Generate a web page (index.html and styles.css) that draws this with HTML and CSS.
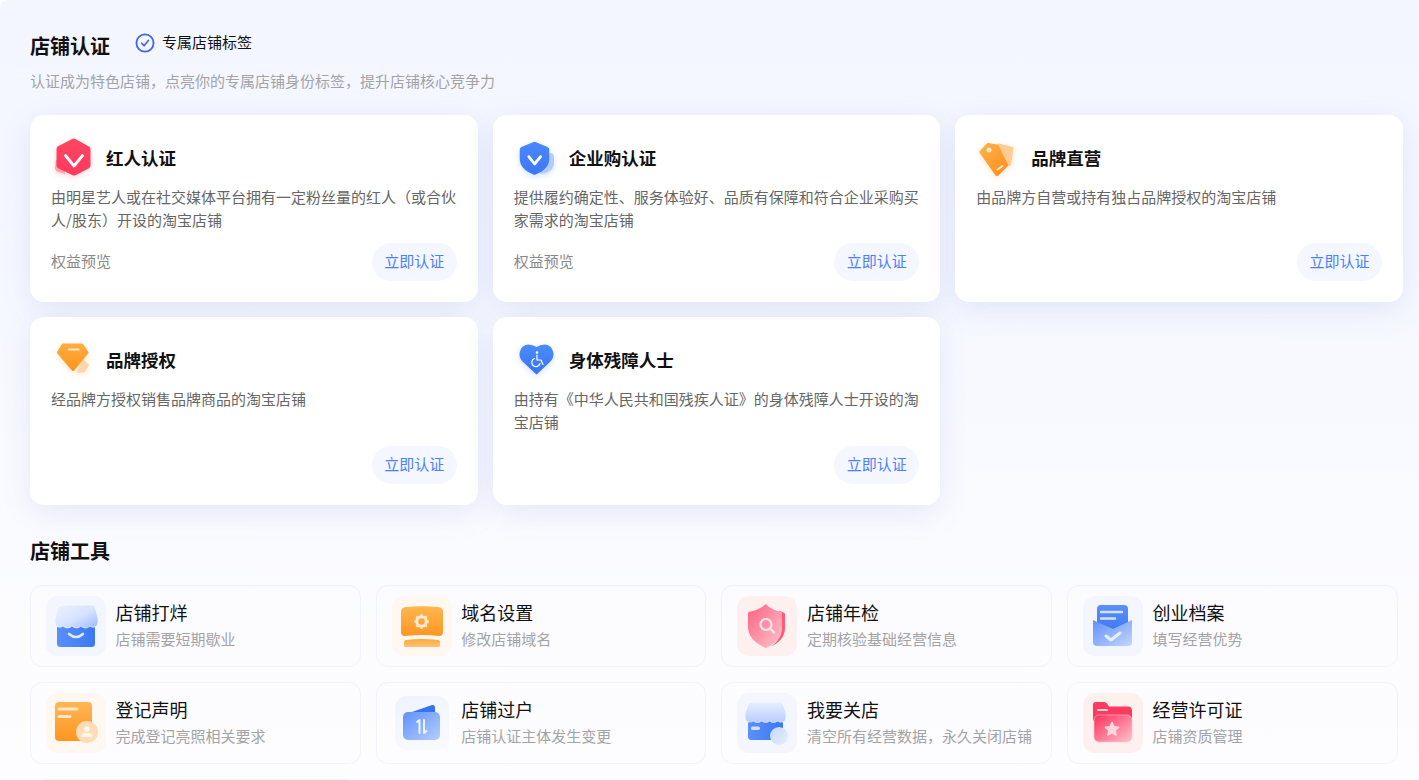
FILE: index.html
```html
<!DOCTYPE html>
<html lang="zh-CN">
<head>
<meta charset="utf-8">
<title>店铺认证</title>
<link rel="stylesheet" href="styles.css">
</head>
<body>
<main class="page">
  <header class="head">
    <h1 class="h1">店铺认证</h1>
    <div class="tag">
      <svg class="tag-icon" width="20" height="20" viewBox="0 0 20 20"><circle cx="10" cy="10" r="8.600" fill="none" stroke="#3f63f5" stroke-width="1.800"/><path d="M6.600 10.200l2.400 2.600 4.400-5.400" fill="none" stroke="#3f63f5" stroke-width="1.600" stroke-linecap="round" stroke-linejoin="round"/></svg>
      <span>专属店铺标签</span>
    </div>
  </header>
  <p class="lead">认证成为特色店铺，点亮你的专属店铺身份标签，提升店铺核心竞争力</p>

  <section class="certs">
    <article class="cert">
      <div class="cert-head">
        <svg class="cert-icon glow-red" viewBox="0 0 49 49"><defs><linearGradient id="c1" x1="0" y1="0" x2="0" y2="1"><stop offset="0" stop-color="#ff4562"/><stop offset="1" stop-color="#ff3a5c"/></linearGradient></defs><path d="M5 24l9-1v15l-7-2q-3-1-3-4z" fill="#ffa3ad"/><path d="M23 5.500l13.500 7.500v16.500L23 36.500 8.500 29.500V13z" fill="url(#c1)" stroke="url(#c1)" stroke-width="6" stroke-linejoin="round"/><path d="M14.500 19.500L23 30l8.500-10.500" fill="none" stroke="#fff" stroke-width="2.800" stroke-linecap="round" stroke-linejoin="round"/></svg>
        <h2 class="cert-title">红人认证</h2>
      </div>
      <p class="cert-desc">由明星艺人或在社交媒体平台拥有一定粉丝量的红人（或合伙人/股东）开设的淘宝店铺</p>
      <div class="cert-foot"><a class="perk">权益预览</a><a class="btn">立即认证</a></div>
    </article>
    <article class="cert">
      <div class="cert-head">
        <svg class="cert-icon glow-blue" viewBox="0 0 49 49"><defs><linearGradient id="c2" x1="0" y1="0" x2="0" y2="1"><stop offset="0" stop-color="#4a86ff"/><stop offset="1" stop-color="#3d79f6"/></linearGradient></defs><path d="M30 17h6q4 0 4 4v6q0 7-8 10l-6 1z" fill="#b3cdfd"/><path d="M20.500 8.500l12 5v9.500q0 8-12 13-12-5-12-13v-9.500z" fill="url(#c2)" stroke="url(#c2)" stroke-width="5.500" stroke-linejoin="round"/><path d="M14.800 20.700l5.800 7.300 6-7.300" fill="none" stroke="#fff" stroke-width="2.800" stroke-linecap="round" stroke-linejoin="round"/></svg>
        <h2 class="cert-title">企业购认证</h2>
      </div>
      <p class="cert-desc">提供履约确定性、服务体验好、品质有保障和符合企业采购买家需求的淘宝店铺</p>
      <div class="cert-foot"><a class="perk">权益预览</a><a class="btn">立即认证</a></div>
    </article>
    <article class="cert">
      <div class="cert-head">
        <svg class="cert-icon glow-orange" viewBox="0 0 49 49"><defs><linearGradient id="c3" x1="0" y1="0" x2="1" y2="1"><stop offset="0" stop-color="#ffb04a"/><stop offset="1" stop-color="#ff8f1c"/></linearGradient></defs><path d="M23 9l13 3.500-2.500 16-6-2z" fill="#ffcc94" stroke="#ffcc94" stroke-width="3" stroke-linejoin="round"/><path d="M12 9l9 1.500 9 18.500-9 9L5.500 16z" fill="url(#c3)" stroke="url(#c3)" stroke-width="4" stroke-linejoin="round"/><circle cx="13" cy="14" r="2.500" fill="#ffe9cf"/><path d="M21.500 33.500l5-3.500" stroke="#ffe9cf" stroke-width="2" stroke-linecap="round"/></svg>
        <h2 class="cert-title">品牌直营</h2>
      </div>
      <p class="cert-desc">由品牌方自营或持有独占品牌授权的淘宝店铺</p>
      <div class="cert-foot"><span></span><a class="btn">立即认证</a></div>
    </article>
    <article class="cert">
      <div class="cert-head">
        <svg class="cert-icon glow-orange" viewBox="0 0 49 49"><defs><linearGradient id="c4" x1="0" y1="0" x2="0" y2="1"><stop offset="0" stop-color="#ffac3e"/><stop offset="1" stop-color="#ff951f"/></linearGradient></defs><path d="M31 20l7 6.500-4 7.500-8 1z" fill="#ffd6ac"/><path d="M12 7h19l5 7.500L22 31.500 7.500 14.500z" fill="url(#c4)" stroke="url(#c4)" stroke-width="3" stroke-linejoin="round"/><path d="M18 11.500h9.500" stroke="#ffe6c8" stroke-width="2.200" stroke-linecap="round"/></svg>
        <h2 class="cert-title">品牌授权</h2>
      </div>
      <p class="cert-desc">经品牌方授权销售品牌商品的淘宝店铺</p>
      <div class="cert-foot"><span></span><a class="btn">立即认证</a></div>
    </article>
    <article class="cert">
      <div class="cert-head">
        <svg class="cert-icon glow-blue" viewBox="0 0 49 49"><defs><linearGradient id="c5" x1="0" y1="0" x2="0" y2="1"><stop offset="0" stop-color="#4c8cf9"/><stop offset="1" stop-color="#3873f5"/></linearGradient></defs><path d="M22.500 36.500L9 24q-4-4-3.500-9Q7 7 14 6.500q5 0 8.500 2.500 3.500-2.500 8.500-2.500 7 .5 8.500 8.500.5 5-3.500 9z" fill="url(#c5)"/><circle cx="23" cy="14.500" r="1.300" fill="#fff"/><path d="M23 17v5h4l2 4.500M20.500 20.500a4.200 4.200 0 1 0 5.500 5" fill="none" stroke="#fff" stroke-width="1.200" stroke-linecap="round" stroke-linejoin="round"/></svg>
        <h2 class="cert-title">身体残障人士</h2>
      </div>
      <p class="cert-desc">由持有《中华人民共和国残疾人证》的身体残障人士开设的淘宝店铺</p>
      <div class="cert-foot"><span></span><a class="btn">立即认证</a></div>
    </article>
  </section>

  <h2 class="h1 tools-title">店铺工具</h2>
  <section class="tools">
    <article class="tool">
      <div class="tile tile-blue">
        <svg width="60" height="60" viewBox="0 0 60 60"><defs><linearGradient id="t1a" x1="0" y1="0" x2="1" y2="0"><stop offset="0" stop-color="#5b90fb"/><stop offset="1" stop-color="#3a78f2"/></linearGradient><linearGradient id="t1b" x1="0" y1="0" x2="1" y2="1"><stop offset="0" stop-color="#eef3ff"/><stop offset=".55" stop-color="#d5e1fe"/><stop offset="1" stop-color="#9dbafa"/></linearGradient></defs><rect x="11" y="26" width="38" height="25" rx="3.500" fill="url(#t1a)"/><path d="M14 9h32q2 0 3 2l3 11v4q0 4-3 5-3 1-5-1-2 2-4.600 2-2.400 0-4.400-2-2 2-4.500 2t-4.500-2q-2 2-4.400 2-2.600 0-4.600-2-2 2-5 1-3-1-3-5v-4l3-11q1-2 3-2z" fill="url(#t1b)" stroke="#fff" stroke-width=".6"/><path d="M23 38q7 6 14 0" fill="none" stroke="#dfe8ff" stroke-width="2.600" stroke-linecap="round"/></svg>
      </div>
      <div class="tool-text"><h3 class="tool-name">店铺打烊</h3><p class="tool-sub">店铺需要短期歇业</p></div>
    </article>
    <article class="tool">
      <div class="tile tile-orange">
        <svg width="60" height="60" viewBox="0 0 60 60"><defs><linearGradient id="t2a" x1="0" y1="0" x2="0" y2="1"><stop offset="0" stop-color="#ffb64f"/><stop offset="1" stop-color="#ff9622"/></linearGradient><linearGradient id="t2b" x1="0" y1="0" x2="0" y2="1"><stop offset="0" stop-color="#ffa93a"/><stop offset="1" stop-color="#ffc278"/></linearGradient></defs><path d="M14 11q16-1.500 32 0 5 .5 5 5v20q0 3-3 4-18-2-36 0-3-1-3-4V16q0-4.500 5-5z" fill="url(#t2a)"/><path d="M14 44q16-2 32 0 2 0 2 2v4q0 1-2 1H14q-2 0-2-1v-4q0-2 2-2z" fill="url(#t2b)"/><circle cx="29.500" cy="25.500" r="4.800" fill="none" stroke="#ffe9cf" stroke-width="3"/><path d="M29.500 18v3M29.500 30v3M22 25.500h3M34 25.500h3M24.200 20.200l2 2M32.800 28.800l2 2M34.800 20.200l-2 2M26.200 28.800l-2 2" stroke="#ffe9cf" stroke-width="2"/></svg>
      </div>
      <div class="tool-text"><h3 class="tool-name">域名设置</h3><p class="tool-sub">修改店铺域名</p></div>
    </article>
    <article class="tool">
      <div class="tile tile-red">
        <svg width="60" height="60" viewBox="0 0 60 60"><defs><linearGradient id="t3a" x1="0" y1="0" x2="1" y2="1"><stop offset="0" stop-color="#ff5f7e"/><stop offset="1" stop-color="#ffc6cf"/></linearGradient></defs><path d="M42 15q5 1 6 3v14q0 13-17 20 13-6 13-20V18z" fill="#ff5a75"/><path d="M29 8l3 3q6 4 12 5 1 0 1 2v14q0 13-16 20Q12 45 11 32V18q0-2 1-2 7-1 13-5z" fill="url(#t3a)"/><circle cx="29" cy="28.500" r="5.500" fill="none" stroke="#ffe1e6" stroke-width="2.200"/><path d="M33.500 33l3.500 3.500" stroke="#ffe1e6" stroke-width="2.200" stroke-linecap="round"/></svg>
      </div>
      <div class="tool-text"><h3 class="tool-name">店铺年检</h3><p class="tool-sub">定期核验基础经营信息</p></div>
    </article>
    <article class="tool">
      <div class="tile tile-blue">
        <svg width="60" height="60" viewBox="0 0 60 60"><defs><linearGradient id="t4a" x1="0" y1="0" x2="0" y2="1"><stop offset="0" stop-color="#5d8ffa"/><stop offset="1" stop-color="#3a76f0"/></linearGradient><linearGradient id="t4b" x1="0" y1="0" x2="1" y2="1"><stop offset="0" stop-color="#5f90fa"/><stop offset="1" stop-color="#c3d5fd"/></linearGradient></defs><rect x="14" y="9" width="31" height="30" rx="4" fill="url(#t4a)"/><path d="M18 16h21M18 22.500h14" stroke="#d5e2ff" stroke-width="2.400" stroke-linecap="round"/><path d="M10 24l20 9 19-9v22q0 4-4 4H14q-4 0-4-4z" fill="url(#t4b)"/><path d="M23 40l5 4 9-7" fill="none" stroke="#e6eeff" stroke-width="3" stroke-linecap="round" stroke-linejoin="round"/></svg>
      </div>
      <div class="tool-text"><h3 class="tool-name">创业档案</h3><p class="tool-sub">填写经营优势</p></div>
    </article>
    <article class="tool">
      <div class="tile tile-orange">
        <svg width="60" height="60" viewBox="0 0 60 60"><defs><linearGradient id="t5a" x1="0" y1="0" x2="0" y2="1"><stop offset="0" stop-color="#ffb657"/><stop offset="1" stop-color="#ff951f"/></linearGradient></defs><rect x="9" y="9" width="37" height="39" rx="4" fill="url(#t5a)"/><path d="M13 16h18M13 23.500h11" stroke="#ffe6c6" stroke-width="3" stroke-linecap="round"/><circle cx="41" cy="39" r="11" fill="#ffdcb8"/><circle cx="41" cy="36" r="2.800" fill="#fff6ec"/><path d="M35.500 44q0-4 3-4h5q3 0 3 4z" fill="#fff6ec"/></svg>
      </div>
      <div class="tool-text"><h3 class="tool-name">登记声明</h3><p class="tool-sub">完成登记亮照相关要求</p></div>
    </article>
    <article class="tool">
      <div class="tile tile-small tile-fade">
        <svg width="54" height="54" viewBox="0 0 54 54"><defs><linearGradient id="t6a" x1="0" y1="0" x2="1" y2="1"><stop offset="0" stop-color="#5f92fb"/><stop offset="1" stop-color="#b6cdfc"/></linearGradient></defs><path d="M14 17l23-8q3-.5 3 3v6z" fill="#3873ef"/><rect x="8" y="16" width="37" height="28" rx="5" fill="url(#t6a)"/><path d="M22 26l2.500-2v13M29 24v13l2.500-2" fill="none" stroke="#edf3ff" stroke-width="2" stroke-linecap="round" stroke-linejoin="round"/></svg>
      </div>
      <div class="tool-text"><h3 class="tool-name">店铺过户</h3><p class="tool-sub">店铺认证主体发生变更</p></div>
    </article>
    <article class="tool">
      <div class="tile tile-blue">
        <svg width="60" height="60" viewBox="0 0 60 60"><defs><linearGradient id="t7a" x1="0" y1="0" x2="1" y2="0"><stop offset="0" stop-color="#5b90fb"/><stop offset="1" stop-color="#3a78f2"/></linearGradient><linearGradient id="t7b" x1="0" y1="0" x2="0" y2="1"><stop offset="0" stop-color="#e8effe"/><stop offset="1" stop-color="#b8cdfc"/></linearGradient><linearGradient id="t7c" x1="0" y1="0" x2="1" y2="1"><stop offset="0" stop-color="#c6d8fe"/><stop offset="1" stop-color="#e8effe"/></linearGradient></defs><rect x="11" y="27" width="35" height="20" rx="3.500" fill="url(#t7a)"/><path d="M14 9h29q2 0 3 2l3 9v4q0 5-4 5-3 .5-4.500-1-2 1.500-4 1.500t-4-1.500q-2 1.500-4 1.500t-4-1.500q-2 1.500-4 1.500t-4-1.500Q15 29 12 29q-4 0-4-5v-4l3-9q1-2 3-2z" fill="url(#t7b)" stroke="#fff" stroke-width=".6"/><rect x="14" y="33.500" width="9" height="3.500" rx="1.500" fill="#d3e0ff"/><circle cx="42" cy="43" r="9" fill="url(#t7c)"/></svg>
      </div>
      <div class="tool-text"><h3 class="tool-name">我要关店</h3><p class="tool-sub">清空所有经营数据，永久关闭店铺</p></div>
    </article>
    <article class="tool">
      <div class="tile tile-red">
        <svg width="60" height="60" viewBox="0 0 60 60"><defs><linearGradient id="t8a" x1="0" y1="0" x2="1" y2="1"><stop offset="0" stop-color="#ff2f5c"/><stop offset="1" stop-color="#ffc2cc"/></linearGradient></defs><path d="M13 9h8q2 0 3 1.500l2 3h19q4 0 4 4v10H10V12q0-3 3-3z" fill="#ff3a60"/><path d="M15 17h9" stroke="#ffd5dc" stroke-width="2.200" stroke-linecap="round"/><rect x="11" y="22" width="38" height="27" rx="5" fill="url(#t8a)" stroke="#ffc9d2" stroke-width=".6"/><path d="M29 29.500l2 4.200 4.600.6-3.400 3.200.9 4.600-4.100-2.300-4.100 2.300.9-4.600-3.400-3.200 4.600-.6z" fill="#ffd5dc" stroke="#ffd5dc" stroke-width="1.500" stroke-linejoin="round"/></svg>
      </div>
      <div class="tool-text"><h3 class="tool-name">经营许可证</h3><p class="tool-sub">店铺资质管理</p></div>
    </article>
    <article class="tool tool-stub"></article>
  </section>
</main>
</body>
</html>
```

FILE: styles.css
```css
* { box-sizing: border-box; }
html, body { margin: 0; height: 100%; overflow: hidden; background: #fff; }
body { font-family: "Noto Sans CJK SC", "Liberation Sans", sans-serif; color: #111; }
h1, h2, h3, p { margin: 0; }

.page {
  height: 780px;
  overflow: hidden;
  padding: 31px 21px 0 30px;
  border-top-left-radius: 8px;
  background: linear-gradient(180deg, #f3f6ff 0, #f6f8ff 300px, #fcfcff 620px, #fdfdff 100%);
}

.head { display: flex; align-items: flex-start; height: 30px; }
.h1 { font-size: 20px; line-height: 30px; font-weight: 700; color: #111; }
.tag { display: flex; align-items: center; height: 22px; margin-left: 25px; font-size: 15px; line-height: 22px; color: #111; }
.tag-icon { margin: 2px 7px 0 0; }
.lead { margin-top: 9px; font-size: 15px; line-height: 22px; color: #a3a3a6; }

.certs {
  display: grid;
  grid-template-columns: repeat(3, 1fr);
  grid-template-rows: 187px 188px;
  gap: 15px;
  margin: 23px 0 0;
  width: 1373px;
}
.cert {
  display: flex;
  flex-direction: column;
  padding: 21px;
  background: #fff;
  border-radius: 14px;
  box-shadow: 0 8px 30px rgba(90, 110, 200, .13);
}
.cert-head { display: flex; align-items: center; height: 49px; }
.cert-icon { flex: none; width: 49px; height: 49px; margin-right: 6px; }
.glow-red { filter: drop-shadow(0 2px 3px rgba(255, 70, 100, .22)); }
.glow-blue { filter: drop-shadow(0 2px 3px rgba(60, 120, 245, .22)); }
.glow-orange { filter: drop-shadow(0 2px 3px rgba(255, 150, 40, .22)); }
.cert-title { padding-bottom: 6px; font-size: 17.5px; line-height: 26px; font-weight: 700; color: #111; }
.cert-desc { font-size: 15px; line-height: 23px; color: #666; }
.cert-foot { display: flex; align-items: center; justify-content: space-between; margin-top: auto; }
.perk { padding-bottom: 4px; font-size: 15px; color: #888; }
.btn {
  display: block;
  width: 85px;
  height: 38px;
  border-radius: 19px;
  background: #f4f7ff;
  color: #4a80ff;
  font-size: 15px;
  line-height: 36px;
  text-align: center;
}

.tools-title { margin-top: 31px; }
.tools {
  display: grid;
  grid-template-columns: repeat(4, 1fr);
  grid-auto-rows: 82px;
  gap: 15px;
  margin-top: 19px;
  width: 1367.6px;
}
.tool {
  display: flex;
  align-items: center;
  padding: 0 15px;
  border: 1px solid #f0f3fb;
  border-radius: 12px;
}
.tool-stub { margin: 0 5px; }
.tile {
  flex: none;
  display: flex;
  align-items: center;
  justify-content: center;
  width: 60px;
  height: 60px;
  border-radius: 12px;
}
.tile-small { width: 54px; height: 54px; margin: 0 3px; }
.tile-blue { background: #f3f6ff; }
.tile-orange { background: #fff8f1; }
.tile-red { background: #fff0f0; }
.tile-fade { background: linear-gradient(160deg, #eff3ff, #f9fbff); }
.tool-text { margin: -2px 0 0 9.6px; }
.tool-name { font-size: 18px; line-height: 23px; font-weight: 400; color: #111; }
.tool-sub { margin-top: 4px; font-size: 15px; line-height: 22px; color: #a3a3a6; }
```
